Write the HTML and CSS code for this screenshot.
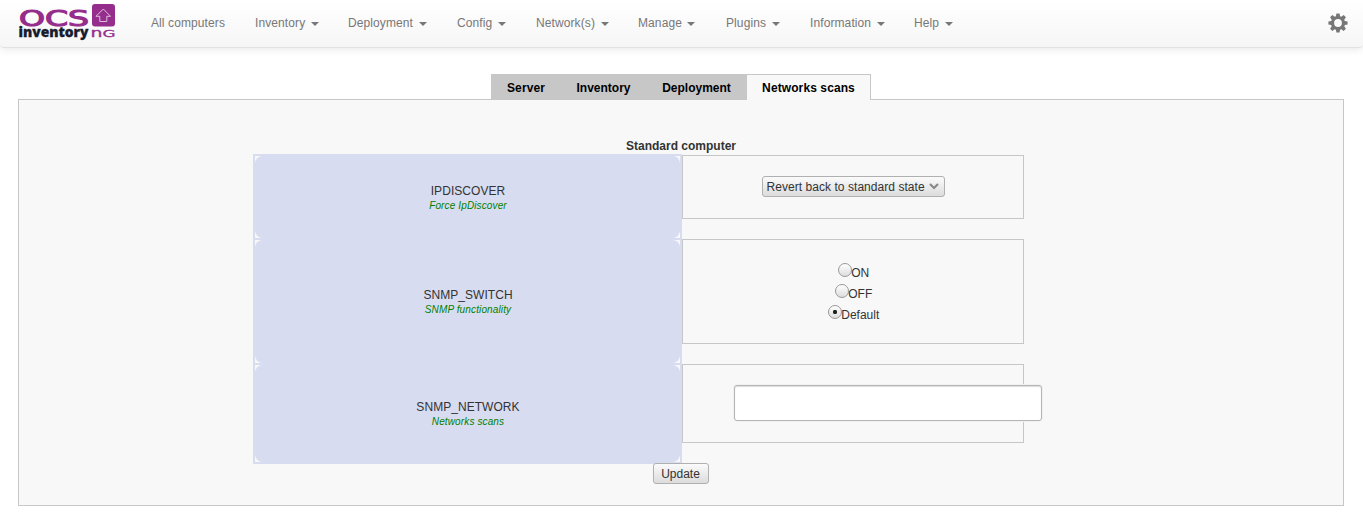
FILE: index.html
```html
<!DOCTYPE html>
<html lang="en">
<head>
<meta charset="utf-8">
<title>OCS Inventory NG</title>
<link rel="stylesheet" href="styles.css">
</head>
<body>
<header class="navbar">
  <svg class="logo" width="98" height="40" viewBox="0 0 98 40" role="img" aria-label="OCS inventory NG">
    <text class="logo-ocs" x="1" y="22" textLength="70" lengthAdjust="spacingAndGlyphs">OCS</text>
    <text class="logo-inv" x="0.5" y="33" textLength="70" lengthAdjust="spacingAndGlyphs">inventory</text>
    <rect class="logo-box" x="74" y="0" width="23" height="22.5" rx="3"/>
    <path class="logo-arrow" d="M85.3 5 L92.5 12.3 H88.8 V17.5 H81.8 V12.3 H78 Z"/>
    <text class="logo-ng" x="72.5" y="32.6" textLength="12" lengthAdjust="spacingAndGlyphs">n</text>
    <text class="logo-ng logo-g" x="84.5" y="32.6" textLength="13" lengthAdjust="spacingAndGlyphs">G</text>
  </svg>
  <nav class="menu">
    <a class="item all">All computers</a>
    <a class="item inventory">Inventory<i class="caret"></i></a>
    <a class="item deployment">Deployment<i class="caret"></i></a>
    <a class="item config">Config<i class="caret"></i></a>
    <a class="item networks">Network(s)<i class="caret"></i></a>
    <a class="item manage">Manage<i class="caret"></i></a>
    <a class="item plugins">Plugins<i class="caret"></i></a>
    <a class="item information">Information<i class="caret"></i></a>
    <a class="item help">Help<i class="caret"></i></a>
  </nav>
  <svg class="gear" width="20" height="20" viewBox="-10 -10 20 20" aria-hidden="true">
    <g fill="#777">
      <path id="tooth" d="M-1.6 -9.6H1.6L2.3 -5.5H-2.3ZM-1.6 9.6H1.6L2.3 5.5H-2.3Z"/>
      <use href="#tooth" transform="rotate(45)"/>
      <use href="#tooth" transform="rotate(90)"/>
      <use href="#tooth" transform="rotate(135)"/>
    </g>
    <circle r="5.5" fill="none" stroke="#777" stroke-width="3.2"/>
  </svg>
</header>
<main>
  <div class="tabs">
    <a class="tab server">Server</a>
    <a class="tab inv">Inventory</a>
    <a class="tab dep">Deployment</a>
    <a class="tab active">Networks scans</a>
  </div>
  <form class="panel">
    <h1 class="heading">Standard computer</h1>
    <div class="row first">
      <div class="label"><div class="corners"><div class="fill">
        <span class="name">IPDISCOVER</span><em class="hint">Force IpDiscover</em>
      </div></div></div>
      <div class="value">
        <div class="select"><span>Revert back to standard state</span>
          <svg width="10" height="7" viewBox="0 0 10 7"><path d="M1 1L5 5L9 1" fill="none" stroke="#888" stroke-width="2.2"/></svg>
        </div>
      </div>
    </div>
    <div class="row second">
      <div class="label"><div class="corners"><div class="fill">
        <span class="name">SNMP_SWITCH</span><em class="hint">SNMP functionality</em>
      </div></div></div>
      <div class="value options">
        <label class="option"><i class="radio"></i><span>ON</span></label>
        <label class="option"><i class="radio"></i><span>OFF</span></label>
        <label class="option"><i class="radio checked"></i><span>Default</span></label>
      </div>
    </div>
    <div class="row third">
      <div class="label"><div class="corners"><div class="fill">
        <span class="name">SNMP_NETWORK</span><em class="hint">Networks scans</em>
      </div></div></div>
      <div class="value"><input class="network" type="text" aria-label="Networks scans"></div>
    </div>
    <button class="update" type="button">Update</button>
  </form>
</main>
</body>
</html>
```

FILE: styles.css
```css
* { box-sizing: border-box; }
body {
  margin: 0;
  height: 512px;
  overflow: hidden;
  background: #fff;
  color: #333;
  font: 12px/20px "Liberation Sans", Arial, sans-serif;
}

/* Top navigation */
.navbar {
  display: flex;
  height: 48px;
  padding-left: 18px;
  background: linear-gradient(#fff, #f6f6f6);
  border-bottom: 1px solid #e2e2e2;
  border-radius: 0 0 4px 4px;
  box-shadow: 0 1px 8px rgba(0, 0, 0, .1);
}
.logo { margin-top: 4px; overflow: visible; flex: none; }
.logo-ocs { font: 21px "DejaVu Sans", sans-serif; fill: #952d8c; stroke: #952d8c; stroke-width: 1.1; }
.logo-inv { font: 800 13.5px "Open Sans", sans-serif; fill: #171c2f; stroke: #171c2f; stroke-width: .3; }
.logo-ng { font: 11.5px "DejaVu Sans", sans-serif; fill: #952d8c; stroke: #952d8c; stroke-width: .3; }
.logo-g { font-size: 9.5px; }
.logo-box { fill: #952d8c; }
.logo-arrow { fill: none; stroke: #dfbedb; stroke-width: 1; }
.menu { display: flex; flex: 1; padding: 13px 0 0 35px; color: #777; }
.item { display: flex; flex: none; white-space: nowrap; letter-spacing: .1px; }
.all { width: 104px; }
.inventory { width: 93px; }
.deployment { width: 109px; }
.config { width: 79px; }
.networks { width: 102px; }
.manage { width: 88px; }
.plugins { width: 84px; }
.information { width: 104px; }
.caret {
  height: 4px;
  margin: 9px 0 0 5.5px;
  border: 4px solid transparent;
  border-top-color: #777;
  border-bottom: 0;
}
.gear { flex: none; margin: 13px 15px 0 0; }

/* Tabs */
.tabs { display: flex; margin: 26px 0 -1px 491px; position: relative; z-index: 1; }
.tab {
  height: 26px;
  padding: 1px 0 0;
  line-height: 26px;
  text-align: center;
  font-weight: bold;
  color: #000;
  background: #c7c7c7;
}
.server { width: 70px; letter-spacing: .1px; }
.inv { width: 85px; }
.dep { width: 101px; }
.active {
  width: 124px;
  padding: 0;
  letter-spacing: .1px;
  background: #f8f8f8;
  border: solid #c7c7c7;
  border-width: 1px 1px 0 0;
}

/* Form panel */
.panel {
  display: flex;
  flex-direction: column;
  height: 407px;
  margin: 0 19px 0 18px;
  padding: 36px 0 0 234px;
  background: #f8f8f8;
  border: 1px solid #c7c7c7;
}
.heading {
  width: 856px;
  height: 18px;
  margin: 0;
  font-size: 12px;
  line-height: 20px;
  text-align: center;
}
.row { display: flex; align-items: flex-start; width: 771px; flex: none; }
.first { height: 85px; }
.second { height: 125px; }
.third { height: 100px; }
.label { width: 429px; height: 100%; padding: 1px 2px; background: #d7dcf1; }
.first .label { padding-top: 2px; }
.third .label { padding-bottom: 2px; }
.corners { height: 100%; background: #f8f8f8; }
.fill {
  display: flex;
  flex-direction: column;
  align-items: center;
  justify-content: center;
  height: 100%;
  padding: 2px 0 0 1px;
  background: #d7dcf1;
  border-radius: 7.5px;
}
.name { line-height: 15px; letter-spacing: .05px; }
.hint { font-size: 10px; line-height: 14px; letter-spacing: .13px; color: #008000; }
.value {
  display: flex;
  justify-content: center;
  width: 342px;
  border: 1px solid #c7c7c7;
}
.first .value { height: 64px; margin-top: 1px; padding-top: 20px; }
.second .value { height: 105px; }
.third .value { height: 79px; padding: 20px 0 0 51px; justify-content: flex-start; }

/* Controls */
.select, .update {
  height: 21px;
  border: 1px solid #b0b0b0;
  border-radius: 3px;
  background: linear-gradient(#fbfbfb, #dcdcdc);
  color: #333;
  font: 12px/19px "Liberation Sans", Arial, sans-serif;
}
.select {
  display: flex;
  align-items: center;
  justify-content: space-between;
  width: 183px;
  padding: 0 5px 0 4px;
  white-space: nowrap;
}
.select span { padding-top: 2px; letter-spacing: .05px; }
.options { flex-direction: column; align-items: center; justify-content: flex-start; padding: 22px 0 0 1px; }
.option { display: flex; height: 21px; line-height: 22px; }
.radio {
  width: 14px;
  height: 14px;
  margin-top: 1px;
  border: 1px solid #999;
  border-radius: 50%;
  background: linear-gradient(#fff, #ddd);
}
.option span { margin-left: -.5px; }
.checked { background: radial-gradient(circle, #222 0 1.8px, transparent 2.5px), linear-gradient(#fff, #ddd); }
.network {
  flex: none;
  width: 308px;
  height: 36px;
  border: 1px solid #b5b5b5;
  border-radius: 3px;
  background: #fff;
  box-shadow: inset 0 1px 1px #ddd, 0 0 0 1px #f1f1f1;
}
.update { width: 56px; margin: -1px 0 0 400px; padding: 1px 1px 0 0; flex: none; }
```
